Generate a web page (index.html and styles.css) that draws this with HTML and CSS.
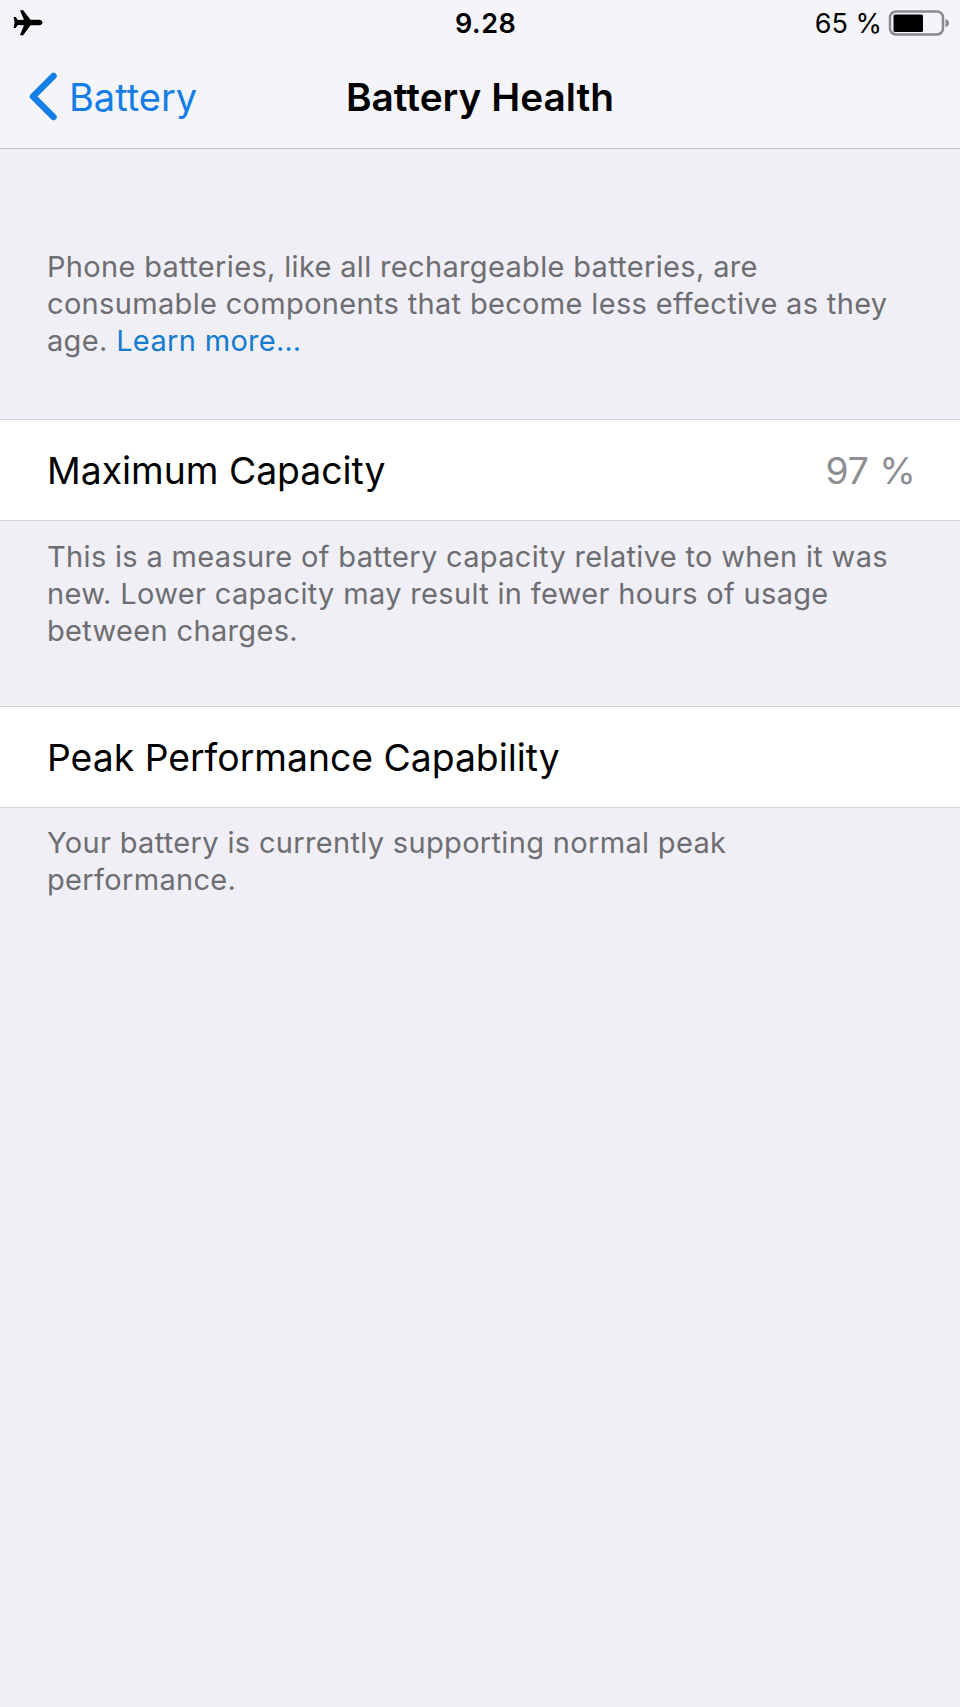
FILE: index.html
```html
<!DOCTYPE html>
<html lang="en">
<head>
<meta charset="utf-8">
<title>Battery Health</title>
<link rel="stylesheet" href="styles.css">
</head>
<body>
<header class="top">
  <div class="status">
    <svg class="plane" viewBox="0 0 30 28" width="30" height="28"><path d="M7 1.500 L10 1 L17.500 10.800 L26 10.800 C28.500 10.800 29.500 12.600 29.500 13.500 C29.500 14.400 28.500 16.200 26 16.200 L17.500 16.200 L10 26.500 L7 26 L11 16.200 L4.800 16 L2.600 19 L0.600 19 L1.600 13.500 L0.600 8 L2.600 8 L4.800 11 L11 10.800 Z"/></svg>
    <span class="time">9.28</span>
    <div class="status-right">
      <span class="pct">65 %</span>
      <svg class="batt" viewBox="0 0 62 28" width="62" height="28"><rect x="2" y="1.500" width="53" height="23" rx="6" fill="none" stroke="#8a8a8e" stroke-width="2.500"/><rect x="5.500" y="4.500" width="29.500" height="17.500" rx="1.500" fill="#000"/><path d="M57.500 9 C60 9.500 61 11.500 61 13 C61 14.500 60 16.500 57.500 17 Z" fill="#8a8a8e"/></svg>
    </div>
  </div>
  <nav class="nav">
    <a class="back"><svg class="chev" viewBox="0 0 32 50" width="32" height="50"><path d="M26.500 4 L6 24.500 L26.500 45" fill="none" stroke="#147ee6" stroke-width="6.500" stroke-linecap="round" stroke-linejoin="round"/></svg><span>Battery</span></a>
    <h1 class="title">Battery Health</h1>
  </nav>
</header>
<main>
  <p class="note intro">Phone batteries, like all rechargeable batteries, are consumable components that become less effective as they age. <a class="link">Learn more…</a></p>
  <div class="row"><span>Maximum Capacity</span><span class="value">97 %</span></div>
  <p class="note after">This is a measure of battery capacity relative to when it was new. Lower capacity may result in fewer hours of usage between charges.</p>
  <div class="row second"><span>Peak Performance Capability</span></div>
  <p class="note after last">Your battery is currently supporting normal peak performance.</p>
</main>
</body>
</html>
```
FILE: styles.css
```css
* { box-sizing: border-box; }
html, body { margin: 0; height: 100%; }
body {
  background: #efeff5;
  font-family: Inter, "Liberation Sans", sans-serif;
  color: #000;
  width: 960px;
  height: 1707px;
  overflow: hidden;
}
.top {
  height: 149px;
  background: #f5f5f9;
  border-bottom: 1px solid #bcbcc0;
}
.status {
  height: 48px;
  padding: 0 10px 0 13px;
  display: flex;
  align-items: center;
  justify-content: space-between;
  position: relative;
}
.plane { display: block; margin-bottom: 2px; }
.time {
  position: absolute;
  left: 455px;
  top: 8px;
  font-size: 27px;
  font-weight: 600;
  line-height: 32px;
  letter-spacing: 0.5px;
}
.status-right { display: flex; align-items: center; gap: 6px; }
.pct { font-size: 27px; line-height: 32px; }
.batt { display: block; }
.nav {
  height: 100px;
  position: relative;
  display: flex;
  align-items: center;
  justify-content: center;
}
.back {
  position: absolute;
  left: 27px;
  top: 24px;
  display: flex;
  align-items: center;
  gap: 10px;
  color: #147ee6;
  font-size: 38px;
  line-height: 50px;
}
.chev { display: block; }
.title {
  margin: 0 0 2px;
  font-size: 38.800px;
  font-weight: 600;
  line-height: 50px;
}
.note {
  margin: 0;
  padding: 0 46px 0 47px;
  color: #6d6d72;
  font-size: 29px;
  letter-spacing: 0.33px;
  line-height: 37px;
}
.intro { padding-top: 99px; padding-bottom: 60px; }
.after { padding-top: 17px; }
.last { padding-top: 16px; }
.link { color: #147ccf; }
.row {
  height: 102px;
  background: #fff;
  border-top: 1px solid #d3d3d8;
  border-bottom: 1px solid #d3d3d8;
  padding: 0 44px 0 47px;
  display: flex;
  align-items: center;
  justify-content: space-between;
  font-size: 37.300px;
}
.value { color: #8e8e93; }
.second { margin-top: 57px; }
```
